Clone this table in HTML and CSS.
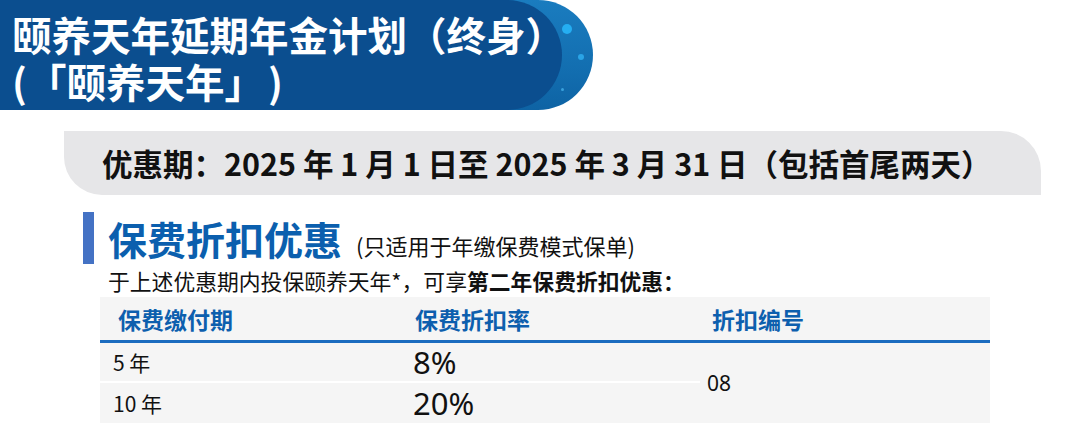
FILE: index.html
```html
<!DOCTYPE html>
<html lang="zh-CN">
<head>
<meta charset="utf-8">
<title>颐养天年</title>
<link rel="stylesheet" href="styles.css">
</head>
<body>
<header class="banner">
  <div class="banner-inner">
    <h1 class="title"><span class="line">颐养天年延期年金计划（终身）</span><span class="line">(「颐养天年」<span class="close">)</span></span></h1>
  </div>
  <span class="dot dot-a"></span>
  <span class="dot dot-b"></span>
  <span class="dot dot-c"></span>
</header>

<div class="period">优惠期：2025 年 1 月 1 日至 2025 年 3 月 31 日（包括首尾两天）</div>

<section class="sec">
  <div class="sec-head">
    <span class="bar"></span>
    <h2 class="sec-title">保费折扣优惠</h2>
    <span class="sec-note">(只适用于年缴保费模式保单)</span>
  </div>
  <p class="lead">于上述优惠期内投保颐养天年*，可享<b>第二年保费折扣优惠：</b></p>
  <table class="rates">
    <thead>
      <tr>
        <th class="c1">保费缴付期</th>
        <th class="c2">保费折扣率</th>
        <th class="c3">折扣编号</th>
      </tr>
    </thead>
    <tbody>
      <tr class="r1">
        <td class="c1 term">5 年</td>
        <td class="c2 pct">8%</td>
        <td class="c3 code" rowspan="2">08</td>
      </tr>
      <tr class="r2">
        <td class="c1 term">10 年</td>
        <td class="c2 pct">20%</td>
      </tr>
    </tbody>
  </table>
</section>
</body>
</html>
```

FILE: styles.css
```css
* { box-sizing: border-box; }
html, body { margin: 0; padding: 0; background: #ffffff; }
body {
  width: 1080px;
  height: 431px;
  overflow: hidden;
  font-family: "Noto Sans CJK SC", "Noto Sans", sans-serif;
  color: #111;
  text-spacing-trim: space-all;
}

.banner {
  position: relative;
  width: 593px;
  height: 110px;
  border-radius: 0 56px 56px 0;
  background: linear-gradient(180deg, #1a7cbf 0%, #136fb1 60%, #0e63a4 100%);
}
.banner-inner {
  width: 562px;
  height: 110px;
  border-radius: 0 56px 56px 0;
  background: #0b4e8f;
  padding: 10px 0 0 12px;
}
.title {
  margin: 0;
  color: #ffffff;
  font-size: 39.5px;
  font-weight: 700;
  white-space: nowrap;
}
.title .line {
  display: block;
  height: 47px;
  line-height: 47px;
}
.title .close { margin-left: 4px; }
.dot {
  position: absolute;
  border-radius: 50%;
  background: #25aef2;
}
.dot-a { left: 562px; top: 24px; width: 10px; height: 10px; }
.dot-b { left: 578px; top: 54px; width: 6px; height: 6px; background: #2aa4e6; }
.dot-c { left: 561px; top: 88px; width: 3px; height: 3px; background: #3aa0dc; }

.period {
  margin: 21px 0 0 64px;
  width: 977px;
  height: 64px;
  background: #e6e6e8;
  border-radius: 0 40px 0 38px;
  padding-left: 38px;
  font-size: 30.5px;
  line-height: 64px;
  font-weight: 700;
  color: #111;
  white-space: nowrap;
}

.sec {
  margin: 17px 0 0 0;
}
.sec-head {
  display: flex;
  align-items: baseline;
  height: 52px;
  padding-left: 83px;
}
.bar {
  align-self: stretch;
  width: 11px;
  background: #4472c4;
  margin-right: 14px;
}
.sec-title {
  margin: 0;
  font-size: 39px;
  line-height: 52px;
  font-weight: 700;
  color: #0b5fae;
}
.sec-note {
  font-size: 22px;
  color: #111;
  margin-left: 14px;
}
.lead {
  margin: 0;
  padding-left: 108px;
  font-size: 21.8px;
  line-height: 33px;
  color: #111;
  white-space: nowrap;
}
.lead b { font-weight: 700; }

.rates {
  margin-left: 100px;
  width: 890px;
  border-collapse: collapse;
  background: #f5f5f5;
}
.rates th, .rates td {
  padding: 0;
  text-align: left;
  vertical-align: middle;
}
.rates th {
  height: 44px;
  font-size: 23px;
  font-weight: 700;
  color: #0d5fae;
  border-bottom: 3px solid #1b6cbf;
  padding-top: 2px;
}
.rates .c1 { width: 305px; padding-left: 13px; }
.rates .c2 { width: 295px; padding-left: 8px; }
.rates .c3 { width: 290px; padding-left: 7px; }
.rates th.c1 { padding-left: 18px; }
.rates th.c2 { padding-left: 10px; }
.rates th.c3 { padding-left: 12px; }

.r1 td { height: 41px; }
.r1 .c1, .r1 .c2 { border-bottom: 2px solid #ffffff; }
.r2 td { height: 41px; }

.term {
  font-size: 21px;
  color: #111;
  padding-top: 6px;
}
.pct {
  font-family: "Noto Sans", "Open Sans", sans-serif;
  font-size: 31px;
  line-height: 36px;
  color: #111;
}
.code {
  font-family: "Noto Sans", "Open Sans", sans-serif;
  font-size: 21px;
  color: #111;
}
```
